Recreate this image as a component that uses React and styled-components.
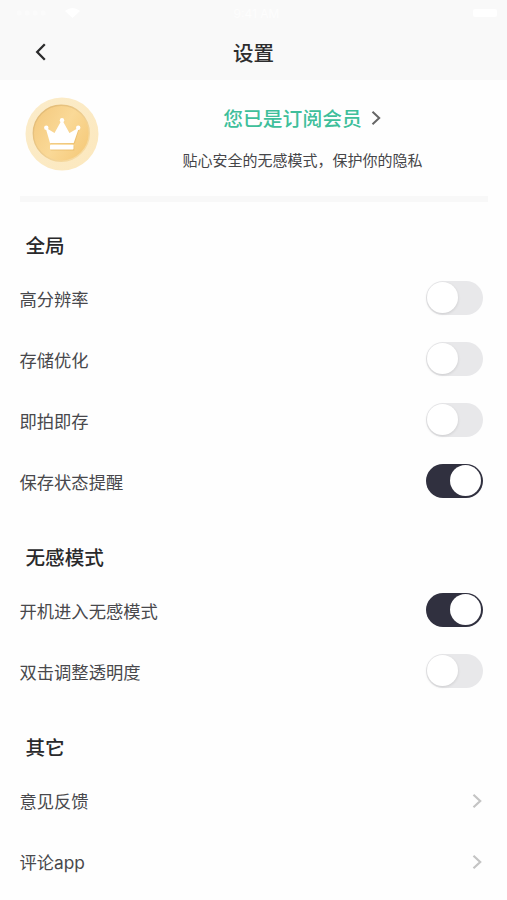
import React, { useState } from 'react';
import styled, { createGlobalStyle } from 'styled-components';

const GlobalStyle = createGlobalStyle`
  * {
    box-sizing: border-box;
  }
  body {
    margin: 0;
    background: #fefefe;
    font-family: Inter, "Noto Sans CJK SC", sans-serif;
  }
`;

const Page = styled.div`
  width: 507px;
  height: 900px;
  overflow: hidden;
  background: #fefefe;
`;

const Header = styled.header`
  height: 80px;
  background: #f9f9f9;
`;

const StatusBar = styled.div`
  height: 26px;
  padding: 0 10px 0 16px;
  display: grid;
  grid-template-columns: 1fr auto 1fr;
  align-items: center;
  color: #fdfdfd;
  font-size: 12px;
`;

const Signal = styled.div`
  display: flex;
  align-items: center;
  gap: 1px;
`;

const Battery = styled.div`
  justify-self: end;
  width: 24px;
  height: 8px;
  border-radius: 2px;
  background: #fff;
`;

const NavBar = styled.div`
  height: 54px;
  padding: 0 35px;
  display: grid;
  grid-template-columns: 12px 1fr 12px;
  align-items: center;
`;

const BackButton = styled.button`
  display: flex;
  padding: 0 0 2px;
  border: 0;
  background: none;
  cursor: pointer;
`;

const Title = styled.h1`
  margin: 0;
  padding-top: 2px;
  color: #2d2d2e;
  font-size: 20.5px;
  font-weight: 500;
  line-height: 30px;
  text-align: center;
`;

const Member = styled.section`
  height: 122px;
  margin: 0 19px 0 20px;
  padding: 17px 0 0 5px;
  display: flex;
  border-bottom: 6px solid #f8f8f8;
`;

const MemberInfo = styled.div`
  flex: 1;
  padding: 7px 0 0 18px;
  display: flex;
  flex-direction: column;
  align-items: center;
`;

const MemberLink = styled.div`
  height: 30px;
  display: flex;
  align-items: center;
  gap: 9px;
  color: #3fbf9b;
  font-size: 19.8px;
  font-weight: 500;
  line-height: 30px;
  cursor: pointer;

  svg {
    margin: 0 1px 2px 0;
  }
`;

const MemberText = styled.p`
  margin: 16px 0 0;
  color: #454548;
  font-size: 15px;
  line-height: 22px;
  white-space: nowrap;
`;

const Group = styled.section`
  padding-bottom: 2px;
`;

const GroupTitle = styled.h2`
  height: 66px;
  margin: 0;
  padding: 29px 0 0 25.5px;
  color: #29292b;
  font-size: 19.6px;
  font-weight: 500;
  line-height: 30px;
`;

const Row = styled.div`
  height: 61px;
  padding: 0 24px 0 19.5px;
  display: flex;
  align-items: center;
  justify-content: space-between;
  color: #48484c;
  font-size: 17.3px;

  > svg {
    margin-right: 1px;
  }
`;

const Switch = styled.button`
  width: 57px;
  height: 34px;
  margin-bottom: 2px;
  padding: ${({ $on }) => ($on ? '0 2px' : '0 1px')};
  display: flex;
  align-items: center;
  justify-content: ${({ $on }) => ($on ? 'flex-end' : 'flex-start')};
  border: 0;
  border-radius: 17px;
  background: ${({ $on }) => ($on ? '#30303f' : '#e8e8ea')};
  cursor: pointer;
`;

const Knob = styled.span`
  width: 31px;
  height: 31px;
  border-radius: 50%;
  background: #fff;
  box-shadow: ${({ $on }) => ($on ? 'none' : '0 1px 3px rgba(0, 0, 0, 0.12)')};
`;

const groups = [
  {
    title: '全局',
    items: [
      { label: '高分辨率', on: false },
      { label: '存储优化', on: false },
      { label: '即拍即存', on: false },
      { label: '保存状态提醒', on: true },
    ],
  },
  {
    title: '无感模式',
    items: [
      { label: '开机进入无感模式', on: true },
      { label: '双击调整透明度', on: false },
    ],
  },
  {
    title: '其它',
    items: [{ label: '意见反馈' }, { label: '评论app' }],
  },
];

function Chevron({ color, width = 2 }) {
  return (
    <svg width="10" height="16" viewBox="0 0 10 16" fill="none">
      <path d="M1.5 1.7L8.2 8L1.5 14.3" stroke={color} strokeWidth={width} />
    </svg>
  );
}

function Coin() {
  return (
    <svg width="74" height="74" viewBox="0 0 74 74">
      <defs>
        <linearGradient id="rim" x1="0" y1="0" x2="1" y2="1">
          <stop offset="0" stopColor="#fbecca" />
          <stop offset="1" stopColor="#fce8be" />
        </linearGradient>
        <linearGradient id="face" x1="0" y1="0.2" x2="1" y2="0.8">
          <stop offset="0" stopColor="#f4ca80" />
          <stop offset="0.5" stopColor="#fad997" />
          <stop offset="1" stopColor="#f5c979" />
        </linearGradient>
        <linearGradient id="edge" x1="0" y1="0" x2="1" y2="1">
          <stop offset="0" stopColor="#dfb66f" />
          <stop offset="1" stopColor="#fbe1aa" />
        </linearGradient>
      </defs>
      <circle cx="37" cy="37" r="36.5" fill="url(#rim)" />
      <circle cx="36.3" cy="36.3" r="28" fill="url(#face)" stroke="url(#edge)" strokeWidth="1.4" />
      <g fill="#dda94f" opacity="0.35" transform="translate(0.8 0.8)">
        <path d="M20.5 31L29.5 36.5L37 23.500L44.500 36.500L53.500 31L49 46H25Z" />
        <rect x="25" y="48" width="23.500" height="4.800" />
      </g>
      <g fill="#fff">
        <path d="M20.500 30.500L29.500 36L37 22.500L44.500 36L54 30.500L48.700 46H25Z" />
        <circle cx="21.300" cy="30.700" r="2.200" />
        <circle cx="37" cy="23.300" r="2.200" />
        <circle cx="53.200" cy="30.700" r="2.200" />
        <rect x="25" y="47.800" width="23.500" height="4.800" rx="0.800" />
      </g>
    </svg>
  );
}

function SwitchRow({ label, on }) {
  const [checked, setChecked] = useState(on);

  return (
    <Row>
      {label}
      <Switch
        $on={checked}
        role="switch"
        aria-checked={checked}
        aria-label={label}
        onClick={() => setChecked(!checked)}
      >
        <Knob $on={checked} />
      </Switch>
    </Row>
  );
}

function App() {
  return (
    <>
      <GlobalStyle />
      <Page>
        <Header>
          <StatusBar>
            <Signal>
              <svg width="48" height="6" viewBox="0 0 48 6" fill="#fbfbfb">
                <circle cx="3" cy="3" r="2.500" />
                <circle cx="11" cy="3" r="2.500" />
                <circle cx="19" cy="3" r="2.500" />
                <circle cx="27" cy="3" r="2.500" />
              </svg>
              <svg width="15" height="10" viewBox="0 0 15 10" fill="#fff">
                <path d="M0 3Q7.500-3 15 3L7.500 10Z" />
              </svg>
            </Signal>
            <span>9:41 AM</span>
            <Battery />
          </StatusBar>
          <NavBar>
            <BackButton aria-label="返回">
              <svg width="12" height="18" viewBox="0 0 12 18" fill="none">
                <path d="M9.800 1.300L2.200 9L9.800 16.700" stroke="#2b2b2c" strokeWidth="2.300" />
              </svg>
            </BackButton>
            <Title>设置</Title>
          </NavBar>
        </Header>
        <Member>
          <Coin />
          <MemberInfo>
            <MemberLink>
              您已是订阅会员
              <Chevron color="#666" />
            </MemberLink>
            <MemberText>贴心安全的无感模式，保护你的隐私</MemberText>
          </MemberInfo>
        </Member>
        {groups.map(group => (
          <Group key={group.title}>
            <GroupTitle>{group.title}</GroupTitle>
            {group.items.map(item =>
              item.on === undefined ? (
                <Row key={item.label}>
                  {item.label}
                  <Chevron color="#c4c4c4" width={2.2} />
                </Row>
              ) : (
                <SwitchRow key={item.label} {...item} />
              )
            )}
          </Group>
        ))}
      </Page>
    </>
  );
}

export default App;
